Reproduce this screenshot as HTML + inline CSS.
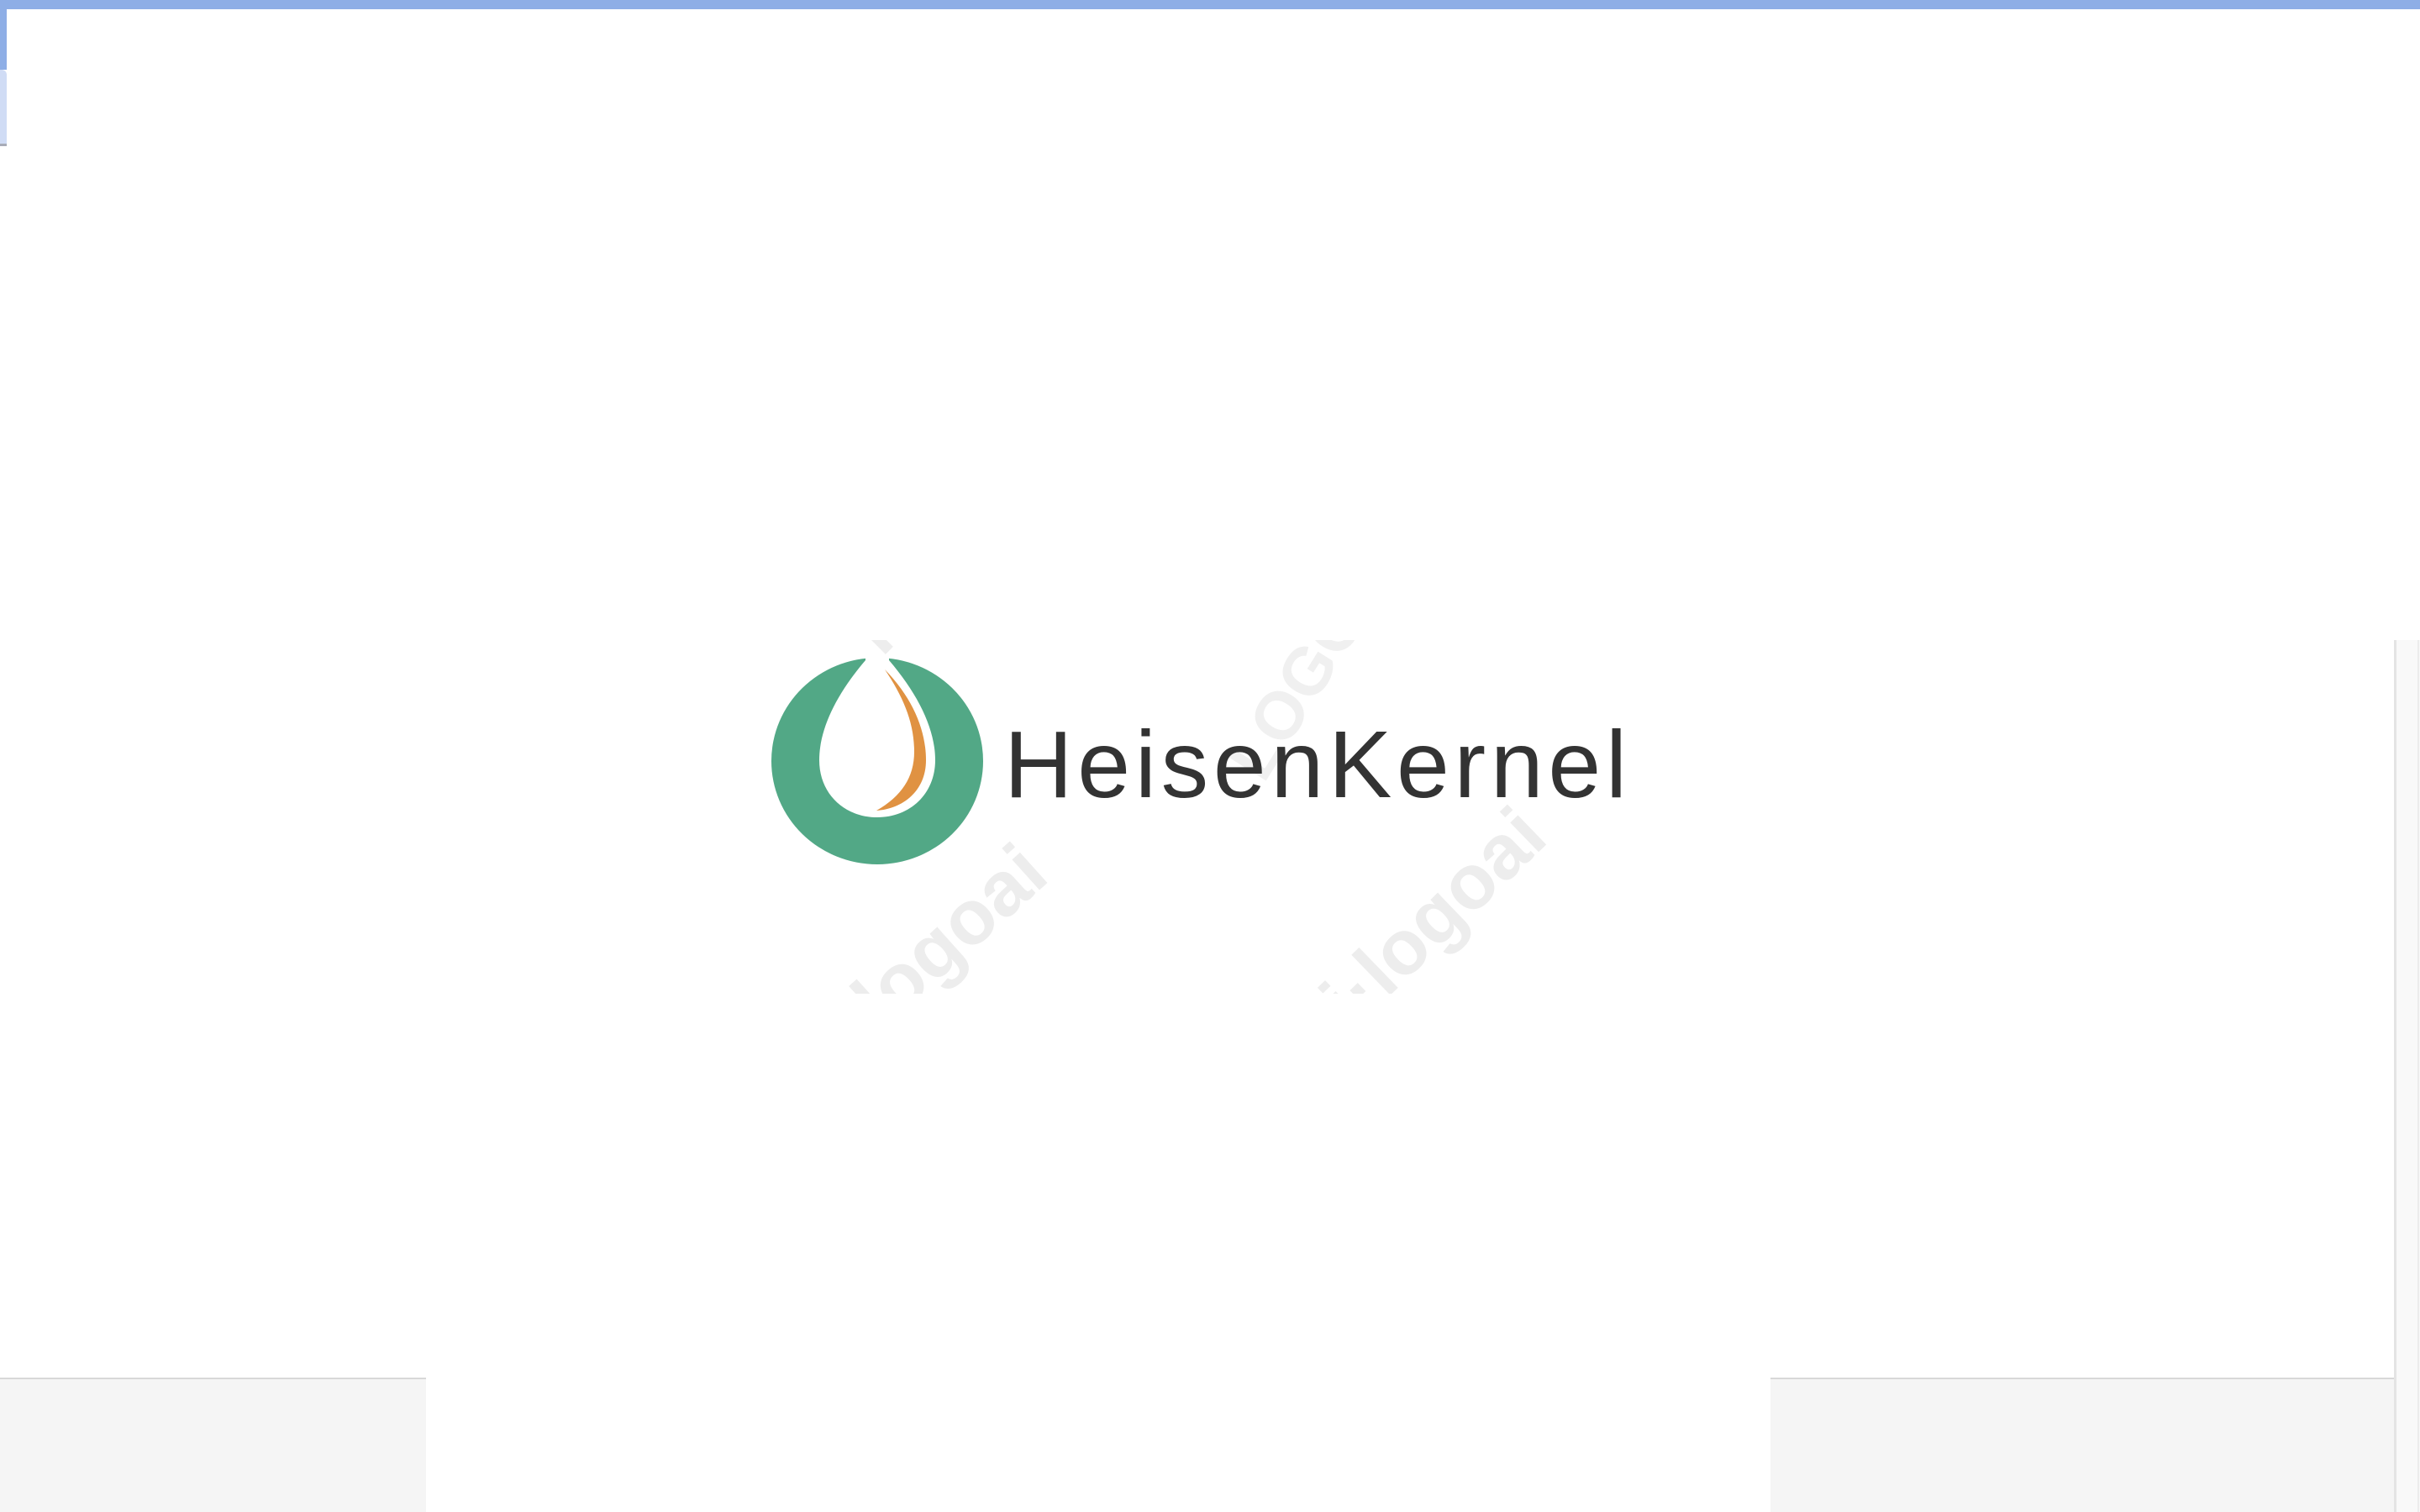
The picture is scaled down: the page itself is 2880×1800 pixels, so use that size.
<!DOCTYPE html>
<html><head><meta charset="utf-8"><style>
html,body{margin:0;padding:0;width:2880px;height:1800px;background:#fff;overflow:hidden;position:relative;font-family:"Liberation Sans",sans-serif}
div{position:absolute}
.wm{color:#ededed;font-weight:bold;font-size:92px;white-space:nowrap;transform-origin:left bottom;line-height:92px}
</style></head><body>
<div style="left:0;top:0;width:2880px;height:11px;background:#8eaee6"></div>
<div style="left:0;top:0;width:8px;height:83px;background:#8eaee6"></div>
<div style="left:0;top:83px;width:8px;height:88px;background:#d0dcf5;border-top-right-radius:6px"></div>
<div style="left:0;top:171px;width:8px;height:3px;background:#a8acb8"></div>

<div style="left:2849px;top:762px;width:3px;height:1038px;background:#e4e4e4"></div>
<div style="left:2852px;top:762px;width:28px;height:1038px;background:#f9f9f9"></div>
<div style="left:2877px;top:762px;width:2px;height:1038px;background:#ececec"></div>

<div style="left:0;top:1640px;width:507px;height:160px;background:#f5f5f5;border-top:2px solid #d8d8d8"></div>
<div style="left:2107px;top:1640px;width:742px;height:160px;background:#f5f5f5;border-top:2px solid #d8d8d8"></div>

<div style="left:880px;top:762px;width:1100px;height:421px;overflow:hidden">
  <div class="wm" style="left:180px;top:385px;transform:rotate(-42deg)">logoai</div>
  <div class="wm" style="left:740px;top:385px;transform:rotate(-44deg)">i·logoai</div>
  <div class="wm" style="left:640px;top:90px;font-size:80px;transform:rotate(-58deg);color:#f0f0f0">LOGOAI.c</div>
  <div class="wm" style="left:180px;top:-60px;transform:rotate(-45deg)">i·</div>
</div>

<svg style="position:absolute;left:0;top:0" width="2880" height="1800">
  <ellipse cx="1044" cy="906" rx="126" ry="123" fill="#52a886"/>
  <path d="M1030,780 L1030,786 C995,827 975,868 975,905 C975,945 1005,973 1044,973 C1083,973 1113,945 1113,905 C1113,868 1093,827 1058,786 L1058,780 Z" fill="#fff"/>
  <path d="M1053,797 C1087,832 1102,870 1102,905 C1102,942 1074,963 1043,965 C1073,948 1088,925 1088,895 C1088,860 1075,830 1053,797 Z" fill="#e09242"/>
</svg>

<div style="left:1195px;top:845px;font-size:113px;line-height:130px;color:#333;letter-spacing:5.7px;white-space:nowrap">HeisenKernel</div>
</body></html>
